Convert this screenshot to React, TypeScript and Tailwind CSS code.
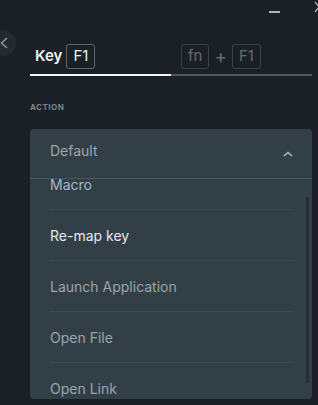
import React from 'react';

const items = [
  { label: 'Macro', tone: 'text-[#a6b6c3]' },
  { label: 'Re-map key', tone: 'text-[#e4e9ec]' },
  { label: 'Launch Application', tone: 'text-[#9aa5ac]' },
  { label: 'Open File', tone: 'text-[#9aa5ac]' },
  { label: 'Open Link', tone: 'text-[#9aa5ac]' },
];

const KeyCap: React.FC<{ label: string; dim?: boolean }> = ({ label, dim }) => (
  <span
    className={`h-[25px] px-[6px] flex items-center justify-center rounded-[3px] border text-[15px] ${
      dim ? 'border-[#3a4147] text-[#646c72]' : 'border-[#5d646a] text-[#eef1f3]'
    }`}
  >
    {label}
  </span>
);

const App: React.FC = () => {
  return (
    <div
      className="relative w-[318px] h-[405px] overflow-hidden bg-[#1a2026]"
      style={{ fontFamily: 'Inter, "Noto Sans", sans-serif' }}
    >
      {/* window controls */}
      <div className="flex justify-end items-start h-[25px]">
        <span className="mt-[11px] mr-[34px] w-[11px] h-[2px] bg-[#aeb4b8]" />
        <svg width="10" height="12" viewBox="0 0 10 12" className="mt-[1px] mr-[-6px]">
          <path d="M1 1 L9 11 M9 1 L1 11" stroke="#aeb4b8" strokeWidth="1.3" fill="none" />
        </svg>
      </div>

      {/* back button */}
      <button className="absolute left-[-10px] top-[30px] w-[26px] h-[26px] rounded-full bg-[#232a30] flex items-center justify-end pr-[8px]">
        <svg width="8" height="12" viewBox="0 0 8 12">
          <path d="M7 1 L1.5 6 L7 11" stroke="#8e969c" strokeWidth="1.5" fill="none" />
        </svg>
      </button>

      {/* key tabs */}
      <div className="ml-[30px] mr-[6px] mt-[19px] flex">
        <div className="w-[141px] pl-[5px] pb-[5px] flex items-center gap-[4px] border-b-2 border-[#f2f4f5]">
          <span className="text-[15px] font-semibold text-[#eef1f3]">Key</span>
          <KeyCap label="F1" />
        </div>
        <div className="flex-1 pl-[10px] pb-[5px] flex items-center gap-[5px] border-b-2 border-[#51575c]">
          <KeyCap label="fn" dim />
          <span className="text-[19px] leading-[25px] text-[#646c72]">+</span>
          <KeyCap label="F1" dim />
        </div>
      </div>

      <div className="ml-[30px] mt-[25px] text-[8px] leading-[12px] font-bold tracking-[0.06em] text-[#7b858b]">ACTION</div>

      {/* dropdown */}
      <div className="ml-[30px] mt-[16px] w-[282px] h-[270px] rounded-[4px] bg-[#333f47] flex flex-col overflow-hidden">
        <div className="h-[50px] shrink-0 flex items-center justify-between pl-[20px] pr-[19px] border-b border-[#4a5660]">
          <span className="text-[14px] text-[#9da6ac] mb-[6px]">Default</span>
          <svg width="10" height="6" viewBox="0 0 10 6">
            <path d="M1 5 L5 1.5 L9 5" stroke="#b4bcc2" strokeWidth="1.5" fill="none" />
          </svg>
        </div>
        <div className="relative flex-1 overflow-hidden">
          <div className="-mt-[20px] flex flex-col">
            {items.map((item) => (
              <div key={item.label} className="mx-[20px] h-[51px] shrink-0 flex items-center border-b border-[#3e4a53]">
                <span className={`text-[14px] ${item.tone}`}>{item.label}</span>
              </div>
            ))}
          </div>
          <div className="absolute right-[3px] top-[18px] w-[3px] h-[186px] bg-[#262f36]" />
        </div>
      </div>
    </div>
  );
};

export default App;
